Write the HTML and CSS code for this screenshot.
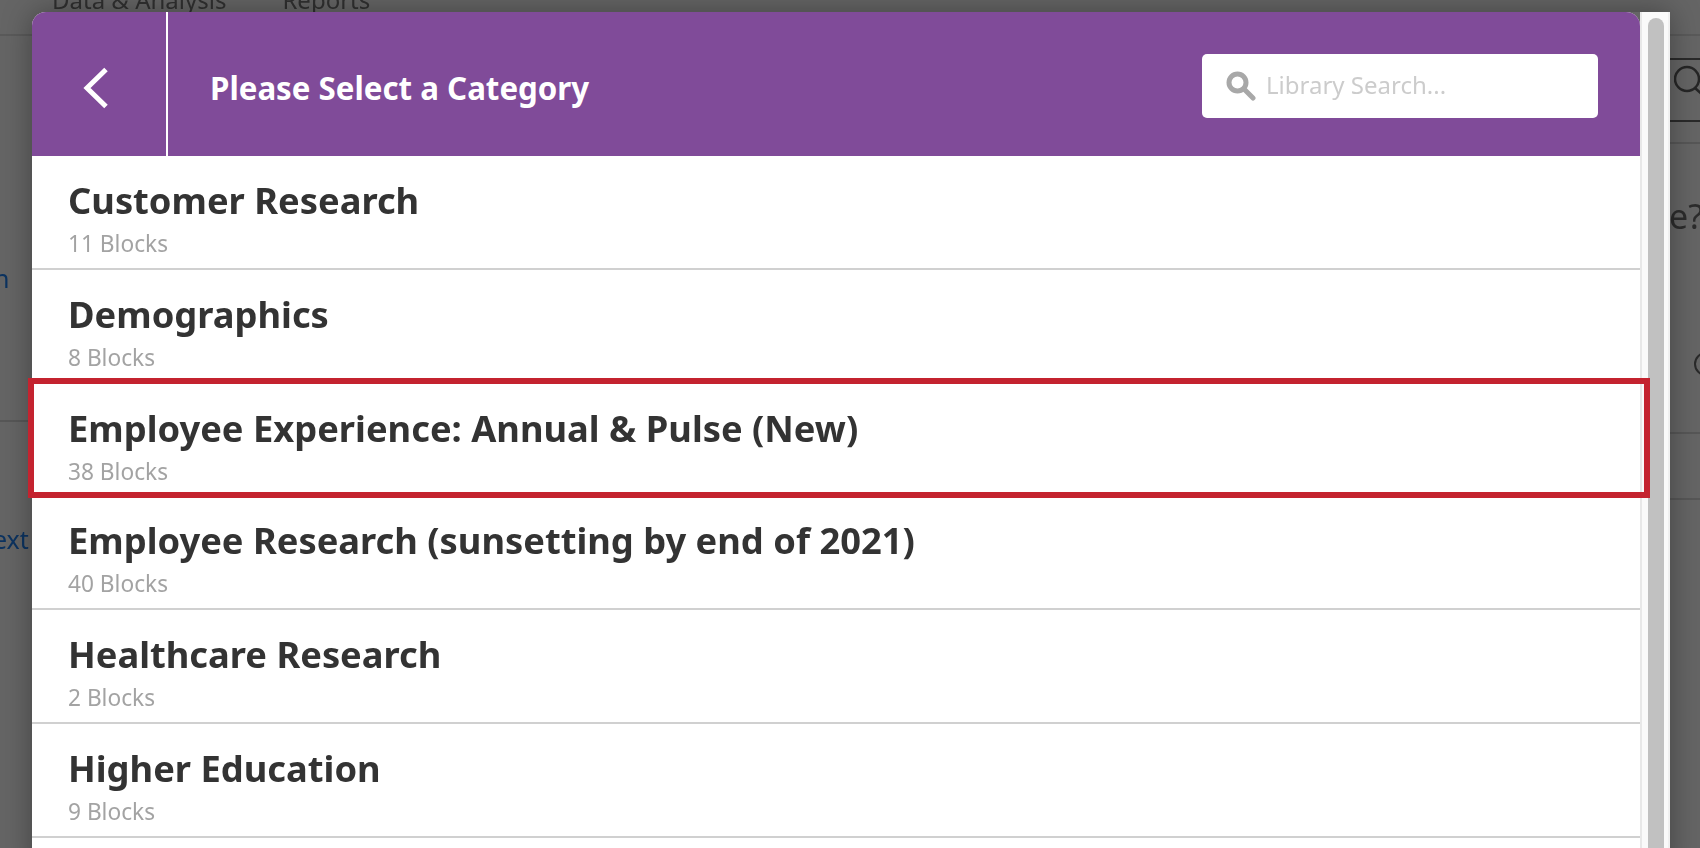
FILE: index.html
```html
<html>
  <head>
    <title>Please Select a Category</title>
    <link rel="stylesheet" href="styles.css">
  </head>

  <body>
    <!-- page behind the dialog, mostly hidden -->
    <div class="page">
      <div class="page-nav">
        <span>Data &amp; Analysis</span>
        <span>Reports</span>
      </div>
      <div class="page-rule rule-left"></div>
      <div class="page-rule rule-right-top"></div>
      <div class="page-rule rule-right-a"></div>
      <div class="page-rule rule-right-b"></div>
      <div class="page-search">
        <svg width="40" height="52" viewBox="0 0 40 52">
          <circle cx="13" cy="14" r="12" fill="none" stroke="#262626" stroke-width="2.5" />
          <path d="M21 23 L32 33" stroke="#262626" stroke-width="2.5" fill="none" />
        </svg>
      </div>
      <div class="page-link link-n">n</div>
      <div class="page-link link-ext">ext</div>
      <div class="page-text">e?</div>
      <div class="page-circle"></div>
    </div>

    <div class="modal">
      <div class="modal-main">
        <div class="modal-header">
          <div class="back-btn">
            <svg width="26" height="42" viewBox="0 0 26 42">
              <path d="M23 2.5 L4 21 L23 39.5" fill="none" stroke="#ffffff" stroke-width="5" />
            </svg>
          </div>
          <div class="modal-title">Please Select a Category</div>
          <div class="search-box">
            <svg width="30" height="30" viewBox="0 0 30 30">
              <circle cx="11.5" cy="11.5" r="8.5" fill="none" stroke="#a8a8a8" stroke-width="5" />
              <path d="M18 18 L27 27" stroke="#a8a8a8" stroke-width="5" stroke-linecap="round" />
            </svg>
            <span class="search-placeholder">Library Search...</span>
          </div>
        </div>

        <div class="category">
          <div class="category-name">Customer Research</div>
          <div class="category-count">11 Blocks</div>
        </div>
        <div class="category">
          <div class="category-name">Demographics</div>
          <div class="category-count">8 Blocks</div>
        </div>
        <div class="category selected">
          <div class="category-name">Employee Experience: Annual &amp; Pulse (New)</div>
          <div class="category-count">38 Blocks</div>
        </div>
        <div class="category">
          <div class="category-name">Employee Research (sunsetting by end of 2021)</div>
          <div class="category-count">40 Blocks</div>
        </div>
        <div class="category">
          <div class="category-name">Healthcare Research</div>
          <div class="category-count">2 Blocks</div>
        </div>
        <div class="category">
          <div class="category-name">Higher Education</div>
          <div class="category-count">9 Blocks</div>
        </div>
      </div>

      <div class="scroll-track">
        <div class="scroll-thumb"></div>
      </div>
    </div>
  </body>
</html>
```

FILE: styles.css
```css
body,
html {
  margin: 0;
  padding: 0;
  height: 100%;
  overflow: hidden;
  font-family: "Noto Sans", Arial, sans-serif;
  background-color: #656565;
}

.page {
  position: fixed;
  left: 0;
  top: 0;
  width: 100%;
  height: 100%;
  overflow: hidden;
}

.page-nav {
  display: flex;
  gap: 56px;
  height: 52px;
  margin-top: -18px;
  padding: 0 0 0 52px;
  font-size: 24px;
  line-height: 36px;
  color: #303030;
  border-bottom: 2px solid #5a5a5a;
}

.page-rule {
  position: absolute;
  height: 2px;
  background: #575757;
}

.rule-left {
  left: 0;
  width: 40px;
  top: 420px;
}

.rule-right-top {
  left: 1670px;
  right: 0;
  top: 142px;
}

.rule-right-a {
  left: 1670px;
  right: 0;
  top: 432px;
}

.rule-right-b {
  left: 1670px;
  right: 0;
  top: 498px;
}

.page-search {
  position: absolute;
  left: 1660px;
  top: 58px;
  width: 60px;
  height: 60px;
  border-top: 2px solid #2a2a2a;
  border-bottom: 2px solid #2a2a2a;
}

.page-search svg {
  display: block;
  margin: 5px 0 0 14px;
}

.page-link {
  position: absolute;
  font-size: 25px;
  line-height: 30px;
  color: #0c3360;
}

.link-n {
  left: -6px;
  top: 263px;
}

.link-ext {
  left: -7px;
  top: 524px;
}

.page-text {
  position: absolute;
  left: 1669px;
  top: 196px;
  font-size: 34px;
  line-height: 40px;
  color: #2c2c2c;
}

.page-circle {
  position: absolute;
  left: 1694px;
  top: 352px;
  width: 20px;
  height: 20px;
  border: 2px solid #2a2a2a;
  border-radius: 50%;
}

.modal {
  position: absolute;
  left: 32px;
  top: 12px;
  width: 1638px;
  height: 860px;
  display: flex;
  box-shadow: 0 0 30px rgba(0, 0, 0, 0.35);
  border-top-left-radius: 14px;
}

.modal-main {
  width: 1608px;
  background: #ffffff;
  border-top-left-radius: 14px;
  border-top-right-radius: 14px;
}

.modal-header {
  height: 144px;
  display: flex;
  align-items: center;
  background-color: #804b99;
  border-radius: 14px 14px 0 0;
}

.back-btn {
  width: 136px;
  height: 100%;
  display: flex;
  align-items: center;
  padding-left: 51px;
  box-sizing: border-box;
  border-right: 2px solid #ffffff;
}

.back-btn svg {
  margin-top: 8px;
}

.modal-title {
  flex: 1;
  padding: 8px 0 0 42px;
  font-size: 31.25px;
  font-weight: 700;
  color: #ffffff;
}

.search-box {
  width: 396px;
  height: 64px;
  margin: 4px 42px 0 0;
  display: flex;
  align-items: center;
  gap: 10px;
  padding-left: 24px;
  box-sizing: border-box;
  background: #ffffff;
  border-radius: 5px;
}

.search-placeholder {
  margin-top: -4px;
  font-size: 24px;
  color: #cccccc;
}

.category {
  height: 112px;
  padding: 21px 0 0 36px;
  box-sizing: border-box;
  margin-bottom: 2px;
  box-shadow: 0 2px 0 #d0d0d0;
}

.category.selected {
  position: relative;
  z-index: 2;
  margin-bottom: 0;
  box-shadow: none;
}

.category.selected::after {
  content: "";
  position: absolute;
  left: -4px;
  right: -10px;
  top: -6px;
  bottom: -2px;
  border: 6px solid #c4232f;
}

.category-name {
  font-size: 36.3px;
  line-height: 46px;
  font-weight: 700;
  color: #333333;
}

.category-count {
  margin-top: 6px;
  font-size: 22.7px;
  line-height: 30px;
  color: #a3a3a3;
}

.scroll-track {
  width: 30px;
  padding-top: 6px;
  box-sizing: border-box;
  padding-left: 6px;
  background: #fafafa;
  border-left: 2px solid #e8e8e8;
  border-right: 2px solid #f0f0f0;
}

.scroll-thumb {
  width: 16px;
  height: 100%;
  background: #c1c1c1;
  border-radius: 8px;
}
```
